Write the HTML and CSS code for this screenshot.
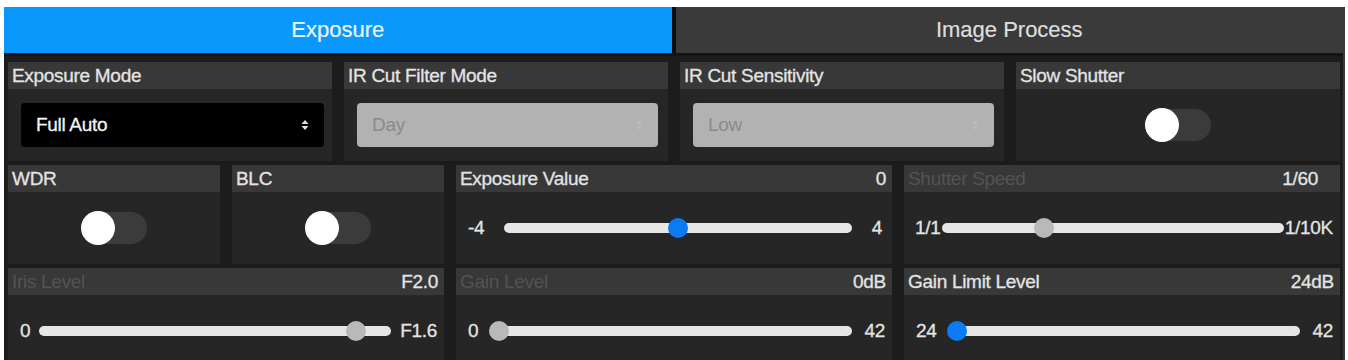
FILE: index.html
```html
<!DOCTYPE html>
<html lang="en">
<head>
    <meta charset="UTF-8">
    <meta name="viewport" content="width=device-width, initial-scale=1.0">
    <title>Camera Settings</title>
    <link rel="stylesheet" href="styles.css">
</head>
<body>
    <div class="panel">
        <div class="tabs">
            <div class="tab active">Exposure</div>
            <div class="tab">Image Process</div>
        </div>

        <div class="grid">
            <!-- row 1 -->
            <div class="cell span-3">
                <div class="cell-head"><span>Exposure Mode</span></div>
                <div class="cell-body">
                    <div class="select">
                        <span>Full Auto</span>
                        <svg class="arrows" width="8" height="12" viewBox="0 0 8 12"><path d="M4 1 L7.5 5 H0.5 Z M4 11 L7.5 7 H0.5 Z" fill="#e0e0e0"/></svg>
                    </div>
                </div>
            </div>
            <div class="cell span-3">
                <div class="cell-head"><span>IR Cut Filter Mode</span></div>
                <div class="cell-body">
                    <div class="select disabled">
                        <span>Day</span>
                        <svg class="arrows" width="8" height="12" viewBox="0 0 8 12"><path d="M4 1 L7.5 5 H0.5 Z M4 11 L7.5 7 H0.5 Z" fill="#bababa"/></svg>
                    </div>
                </div>
            </div>
            <div class="cell span-3">
                <div class="cell-head"><span>IR Cut Sensitivity</span></div>
                <div class="cell-body">
                    <div class="select disabled">
                        <span>Low</span>
                        <svg class="arrows" width="8" height="12" viewBox="0 0 8 12"><path d="M4 1 L7.5 5 H0.5 Z M4 11 L7.5 7 H0.5 Z" fill="#bababa"/></svg>
                    </div>
                </div>
            </div>
            <div class="cell span-3">
                <div class="cell-head"><span>Slow Shutter</span></div>
                <div class="cell-body center">
                    <div class="toggle"><div class="knob"></div></div>
                </div>
            </div>

            <!-- row 2 -->
            <div class="cell span-2">
                <div class="cell-head"><span>WDR</span></div>
                <div class="cell-body center">
                    <div class="toggle"><div class="knob"></div></div>
                </div>
            </div>
            <div class="cell span-2">
                <div class="cell-head"><span>BLC</span></div>
                <div class="cell-body center">
                    <div class="toggle"><div class="knob"></div></div>
                </div>
            </div>
            <div class="cell span-4">
                <div class="cell-head"><span>Exposure Value</span><span class="value">0</span></div>
                <div class="cell-body">
                    <div class="slider ev">
                        <span class="min">-4</span>
                        <div class="track"><div class="thumb blue" style="left: 50%"></div></div>
                        <span class="max">4</span>
                    </div>
                </div>
            </div>
            <div class="cell span-4">
                <div class="cell-head"><span class="muted">Shutter Speed</span><span class="value wide">1/60</span></div>
                <div class="cell-body">
                    <div class="slider tight">
                        <span class="min">1/1</span>
                        <div class="track"><div class="thumb" style="left: 30%"></div></div>
                        <span class="max">1/10K</span>
                    </div>
                </div>
            </div>

            <!-- row 3 -->
            <div class="cell span-4">
                <div class="cell-head"><span class="muted">Iris Level</span><span class="value">F2.0</span></div>
                <div class="cell-body">
                    <div class="slider iris">
                        <span class="min">0</span>
                        <div class="track"><div class="thumb" style="left: 90%"></div></div>
                        <span class="max">F1.6</span>
                    </div>
                </div>
            </div>
            <div class="cell span-4">
                <div class="cell-head"><span class="muted">Gain Level</span><span class="value">0dB</span></div>
                <div class="cell-body">
                    <div class="slider">
                        <span class="min">0</span>
                        <div class="track"><div class="thumb" style="left: 2.5%"></div></div>
                        <span class="max">42</span>
                    </div>
                </div>
            </div>
            <div class="cell span-4">
                <div class="cell-head"><span>Gain Limit Level</span><span class="value">24dB</span></div>
                <div class="cell-body">
                    <div class="slider">
                        <span class="min">24</span>
                        <div class="track"><div class="thumb blue" style="left: 2.5%"></div></div>
                        <span class="max">42</span>
                    </div>
                </div>
            </div>
        </div>
    </div>
</body>
</html>
```

FILE: styles.css
```css
html, body {
    margin: 0;
    padding: 0;
    background: #fff;
    overflow: hidden;
}
body {
    font-family: "Liberation Sans", Arial, sans-serif;
    color: #e4e4e4;
}
.panel {
    margin: 7px 3px 0 4px;
    height: 353px;
    overflow: hidden;
    background: #1c1c1c;
    border-right: 2px solid #3a3a3a;
}
.tabs {
    display: grid;
    grid-template-columns: 1fr 1fr;
    column-gap: 4px;
    background: #0e0e0e;
    border-bottom: 3px solid #141414;
}
.tab {
    height: 46px;
    display: flex;
    align-items: center;
    justify-content: center;
    font-size: 22px;
    background: #3a3a3a;
    color: #dedede;
    -webkit-text-stroke: 0.2px currentColor;
}
.tab.active {
    background: #0a98fc;
    color: #eaf6ff;
}
.grid {
    display: grid;
    grid-template-columns: repeat(12, 1fr);
    grid-auto-rows: 99px;
    gap: 4px 12px;
    padding: 6px 3px 0 4px;
}
.span-2 { grid-column: span 2; }
.span-3 { grid-column: span 3; }
.span-4 { grid-column: span 4; }
.cell {
    background: #262626;
    display: flex;
    flex-direction: column;
}
.cell-head {
    height: 27px;
    flex-shrink: 0;
    background: #383838;
    display: flex;
    align-items: center;
    justify-content: space-between;
    padding: 0 6px 0 4px;
    font-size: 19px;
    letter-spacing: -0.3px;
    -webkit-text-stroke: 0.3px currentColor;
}
.cell-head .muted {
    color: #535353;
    -webkit-text-stroke: 0;
}
.cell-head .value.wide {
    margin-right: 16px;
}
.cell-body {
    flex: 1;
    display: flex;
    align-items: center;
}
.cell-body.center {
    justify-content: center;
}
.select {
    flex: 1;
    height: 44px;
    margin: 0 8px 0 13px;
    border-radius: 4px;
    background: #000;
    display: flex;
    align-items: center;
    justify-content: space-between;
    padding: 0 15px;
    font-size: 19px;
    letter-spacing: -0.3px;
    color: #f2f2f2;
    -webkit-text-stroke: 0.3px currentColor;
}
.select.disabled {
    background: #b2b2b2;
    color: #8a8a8a;
    margin: 0 10px 0 13px;
    -webkit-text-stroke: 0;
}
.toggle {
    position: relative;
    width: 66px;
    height: 32px;
    border-radius: 16px;
    background: #3b3b3b;
}
.toggle .knob {
    position: absolute;
    left: 0;
    top: -1px;
    width: 34px;
    height: 34px;
    border-radius: 50%;
    background: #fff;
}
.slider {
    flex: 1;
    display: flex;
    align-items: center;
    gap: 12px;
    padding: 0 7px 0 12px;
    font-size: 19px;
    letter-spacing: -0.3px;
    -webkit-text-stroke: 0.3px currentColor;
}
.slider.tight {
    gap: 1px;
    padding-left: 11px;
}
.slider.iris {
    gap: 9px;
}
.slider.ev {
    gap: 20px;
    padding-right: 10px;
}
.track {
    position: relative;
    flex: 1;
    height: 10px;
    border-radius: 5px;
    background: #e6e6e6;
}
.thumb {
    position: absolute;
    top: 50%;
    width: 20px;
    height: 20px;
    margin: -10px 0 0 -10px;
    border-radius: 50%;
    background: #b9b9b9;
}
.thumb.blue {
    background: #0b7bf5;
}
```
